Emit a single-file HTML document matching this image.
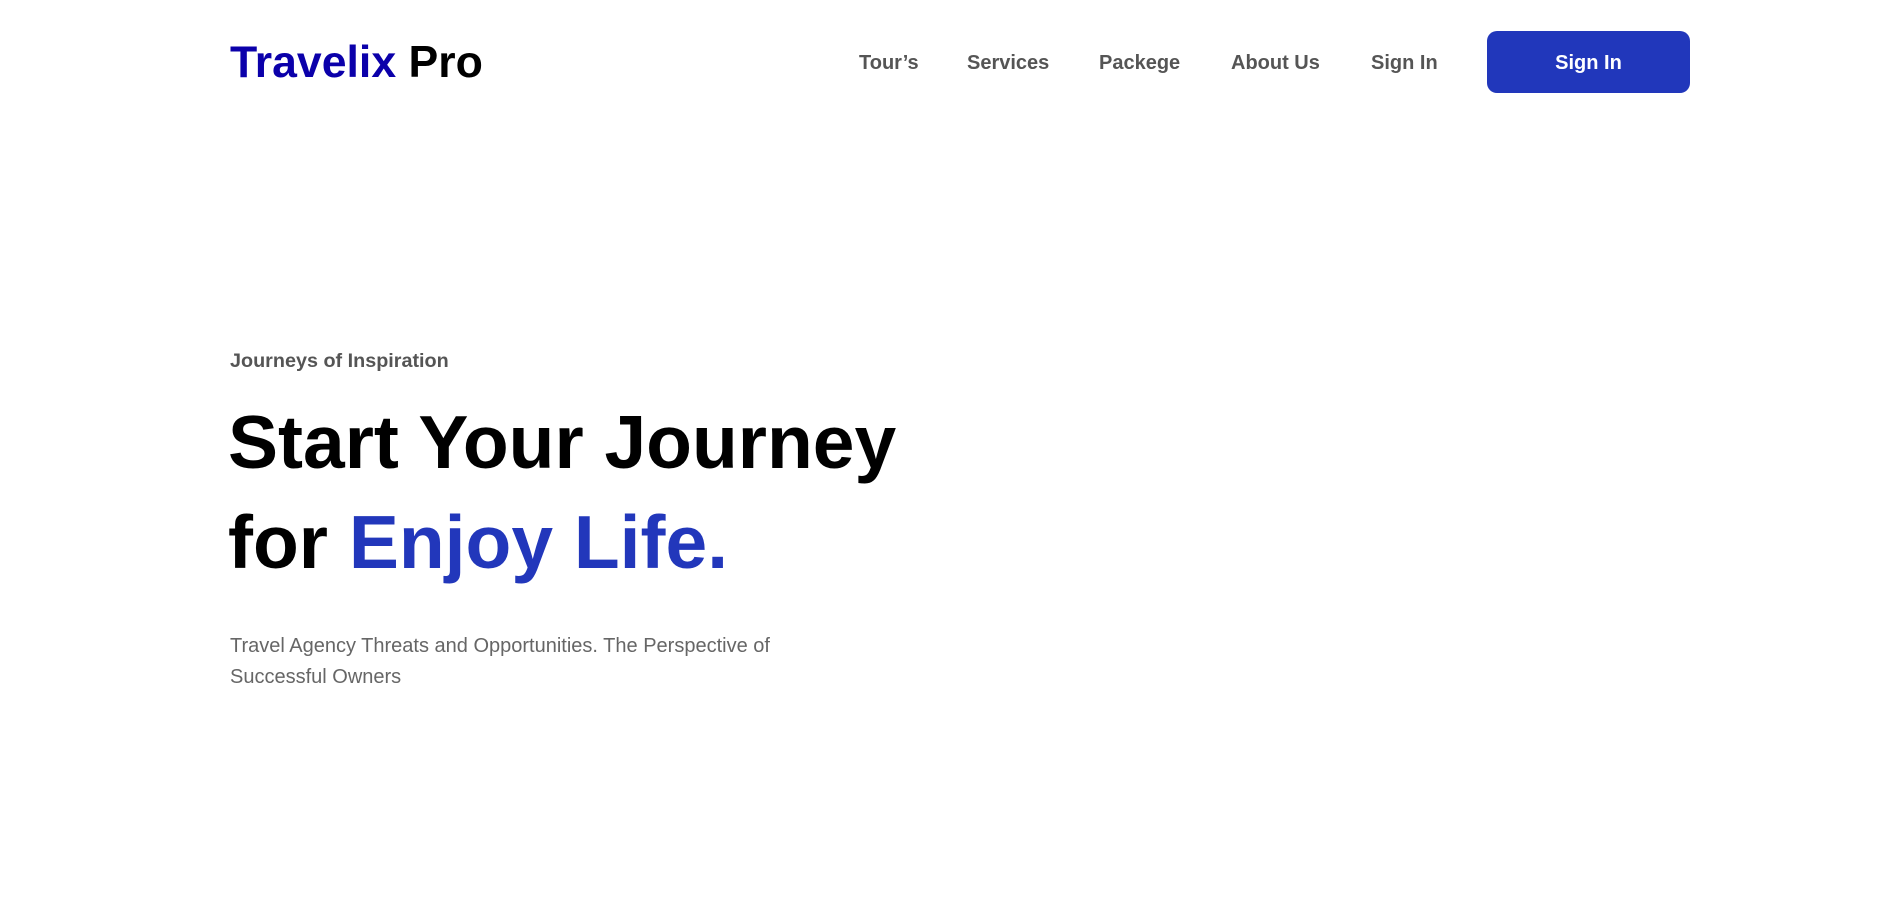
<!DOCTYPE html>
<html><head><meta charset="utf-8">
<style>
*{margin:0;padding:0;box-sizing:border-box}
html,body{width:1897px;height:922px;background:#fff;overflow:hidden;font-family:"Liberation Sans",Arial,sans-serif}
.abs{position:absolute;white-space:nowrap}
.logo{left:230px;top:34px;font-size:44.6px;font-weight:700;line-height:58px;color:#000}
.logo span{color:#0b00aa}
.nav{top:51px;font-size:20px;font-weight:700;color:#555;line-height:24px}
.btn{left:1487px;top:31px;width:203px;height:62px;padding-top:2px;background:#2137bb;border-radius:10px;color:#fff;font-size:20px;font-weight:700;display:flex;align-items:center;justify-content:center}
.sub{left:230px;top:349px;font-size:19.8px;font-weight:700;color:#555;line-height:24px}
.h1{left:228px;top:392px;font-size:75px;font-weight:700;color:#000;line-height:100px}
.h1 span{color:#2237bb}
.p{left:230px;top:631px;font-size:20px;color:#666;line-height:31px}
</style></head><body>
<div class="abs logo"><span>Travelix</span> Pro</div>
<div class="abs nav" style="left:859px">Tour’s</div>
<div class="abs nav" style="left:967px">Services</div>
<div class="abs nav" style="left:1099px">Packege</div>
<div class="abs nav" style="left:1231px">About Us</div>
<div class="abs nav" style="left:1371px">Sign In</div>
<div class="abs btn">Sign In</div>
<div class="abs sub">Journeys of Inspiration</div>
<div class="abs h1">Start Your Journey<br>for <span>Enjoy Life.</span></div>
<div class="abs p">Travel Agency Threats and Opportunities. The Perspective of<br>Successful Owners</div>
</body></html>
